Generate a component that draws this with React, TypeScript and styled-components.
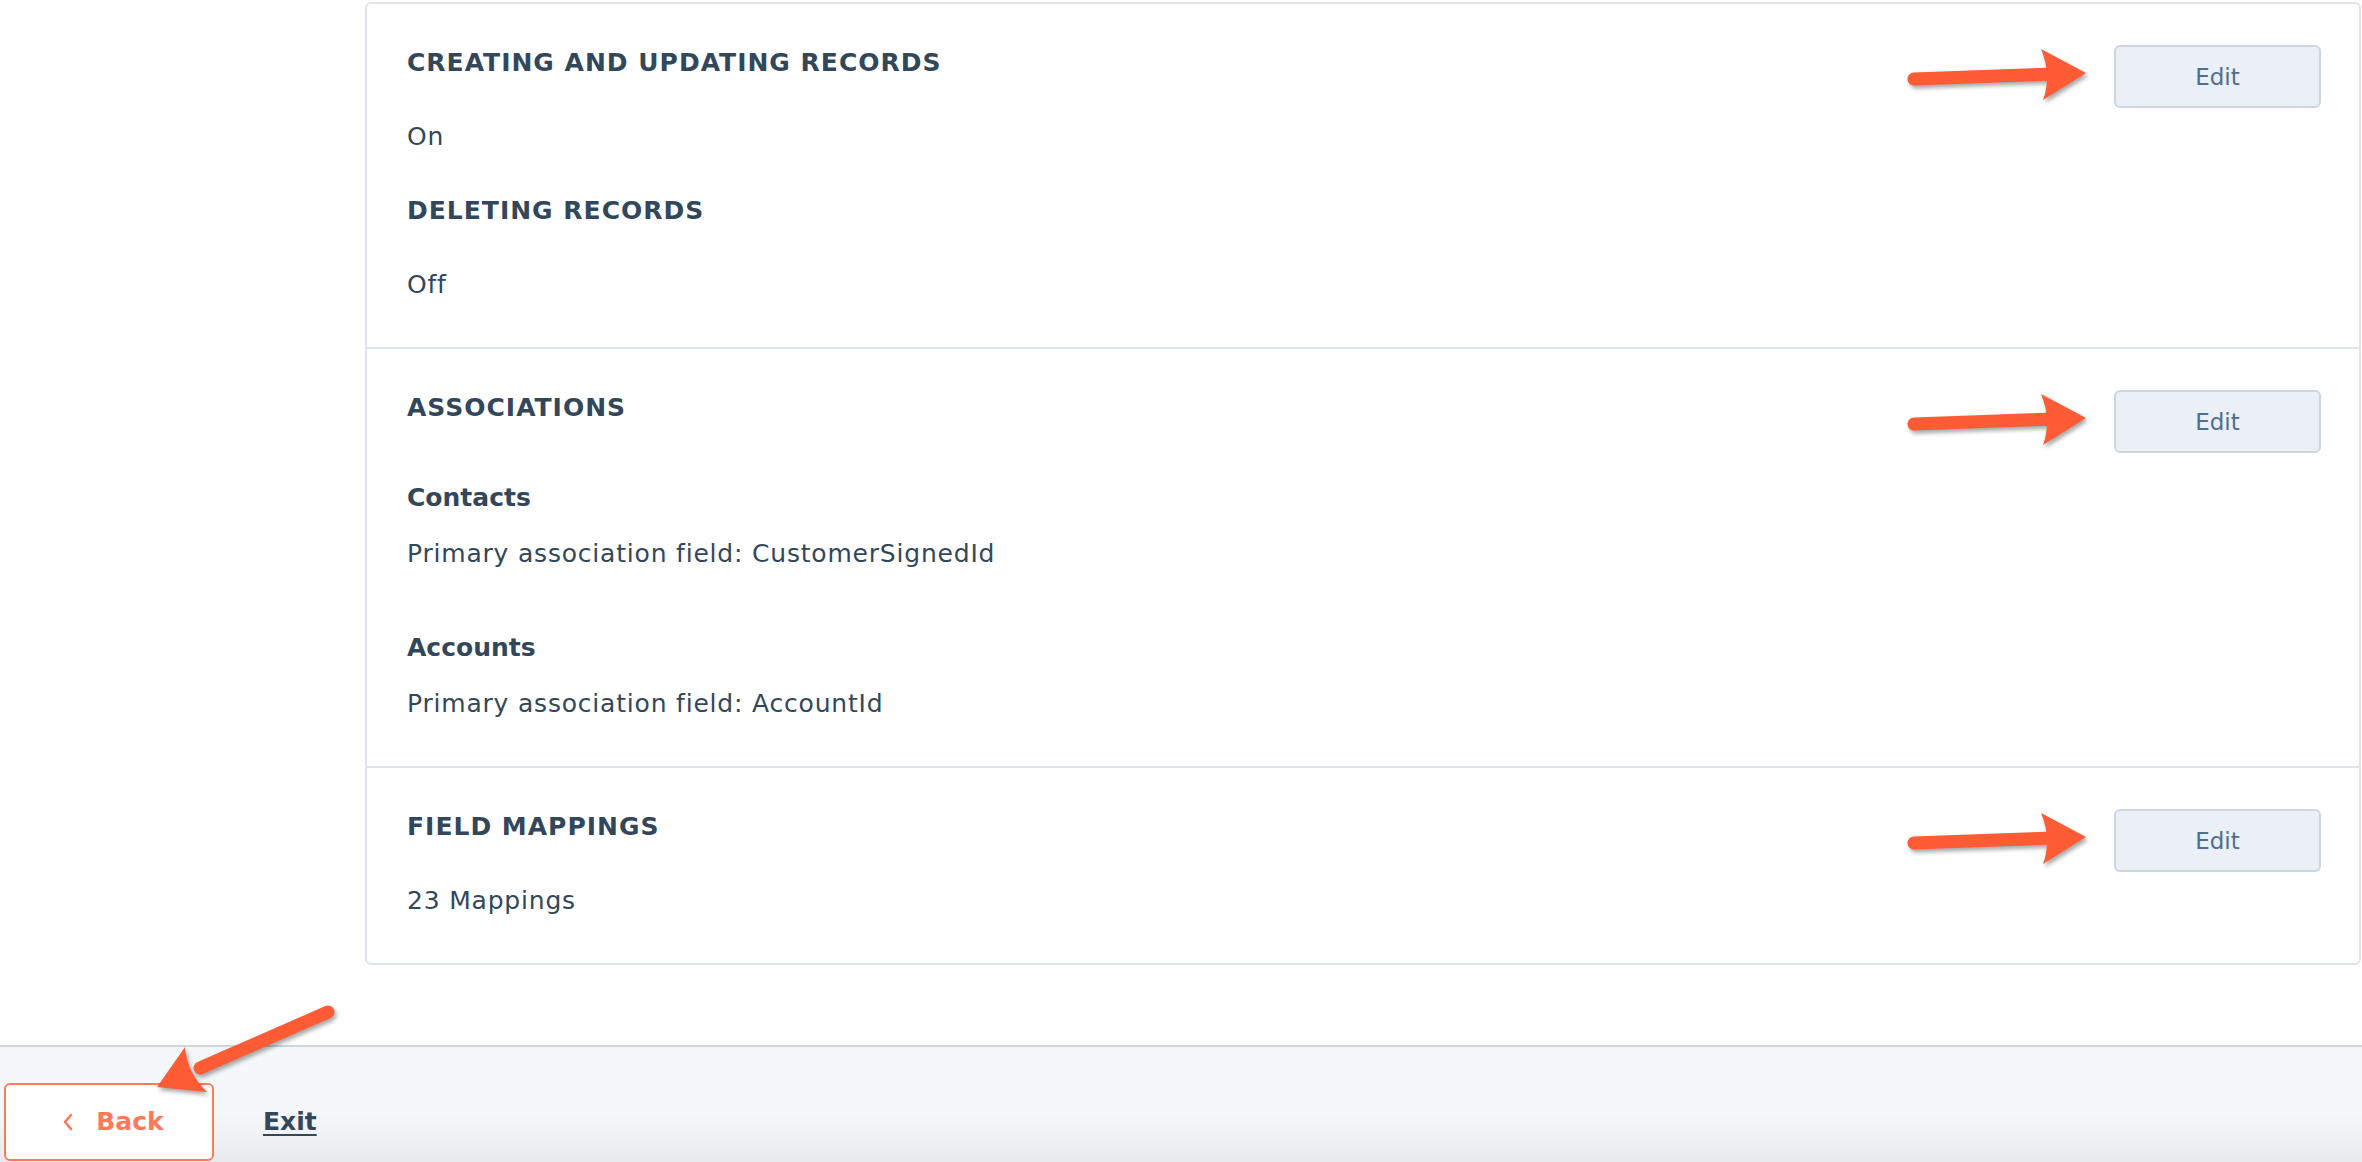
import styled, { createGlobalStyle } from "styled-components";

const FONT = `"DejaVu Sans", Verdana, sans-serif`;

const GlobalStyle = createGlobalStyle`
  html, body {
    margin: 0;
    padding: 0;
    background: #fff;
  }
  body {
    font-family: ${FONT};
    color: #33475b;
  }
  * {
    box-sizing: border-box;
  }
`;

type Assoc = { name: string; field: string };

const associations: Assoc[] = [
  { name: "Contacts", field: "CustomerSignedId" },
  { name: "Accounts", field: "AccountId" },
];

function PointerArrow() {
  // orange annotation arrow pointing right at the Edit button
  return (
    <ArrowSvg width="200" height="70" viewBox="0 0 200 70">
      <line
        x1="10"
        y1="38"
        x2="150"
        y2="33"
        stroke="#ff5b35"
        strokeWidth="13"
        strokeLinecap="round"
      />
      <path d="M137 8 L182 32 L139 59 Q148 34 137 8 Z" fill="#ff5b35" />
    </ArrowSvg>
  );
}

function BackArrow() {
  return (
    <BackArrowSvg width="210" height="120" viewBox="0 0 210 120">
      <line
        x1="188"
        y1="23"
        x2="60"
        y2="79"
        stroke="#ff5b35"
        strokeWidth="13"
        strokeLinecap="round"
      />
      <path d="M45 58 L17 98 L67 103 Q47 84 45 58 Z" fill="#ff5b35" />
    </BackArrowSvg>
  );
}

function EditButton() {
  return (
    <ButtonWrap>
      <PointerArrow />
      <Edit>Edit</Edit>
    </ButtonWrap>
  );
}

export default function App() {
  return (
    <>
      <GlobalStyle />
      <Page>
        <Main>
          <Card>
            <Section>
              <Details>
                <Title>Creating and updating records</Title>
                <Value>On</Value>
                <Title>Deleting records</Title>
                <Value>Off</Value>
              </Details>
              <EditButton />
            </Section>

            <Section>
              <div>
                <Title>Associations</Title>
                <AssocList>
                  {associations.map((a) => (
                    <AssocGroup key={a.name}>
                      <SubTitle>{a.name}</SubTitle>
                      <Value>Primary association field: {a.field}</Value>
                    </AssocGroup>
                  ))}
                </AssocList>
              </div>
              <EditButton />
            </Section>

            <Section>
              <Details>
                <Title>Field mappings</Title>
                <Value>23 Mappings</Value>
              </Details>
              <EditButton />
            </Section>
          </Card>
        </Main>

        <Footer>
          <BackArrow />
          <BackButton>
            <svg width="12" height="18" viewBox="0 0 12 18">
              <path
                d="M9 2 L3 9 L9 16"
                fill="none"
                stroke="#ff7a59"
                strokeWidth="2.6"
                strokeLinecap="round"
                strokeLinejoin="round"
              />
            </svg>
            Back
          </BackButton>
          <ExitLink href="#">Exit</ExitLink>
        </Footer>
      </Page>
    </>
  );
}

const Page = styled.div`
  height: 100vh;
  display: flex;
  flex-direction: column;
`;

const Main = styled.main`
  flex: 1;
  padding: 2px 1px 0 365px;
`;

const Card = styled.div`
  background: #fff;
  border: 2px solid #dfe3eb;
  border-radius: 6px;
`;

const Section = styled.section`
  display: flex;
  justify-content: space-between;
  align-items: flex-start;
  padding: 41px 38px 44px 40px;
  & + & {
    border-top: 2px solid #dfe3eb;
  }
`;

const Details = styled.div`
  display: flex;
  flex-direction: column;
  gap: 38px;
`;

const Title = styled.h2`
  margin: 0;
  font-size: 25px;
  line-height: 36px;
  font-weight: 700;
  letter-spacing: 1px;
  text-transform: uppercase;
  color: #33475b;
`;

const SubTitle = styled.h3`
  margin: 0;
  font-size: 25px;
  line-height: 36px;
  font-weight: 700;
  color: #33475b;
`;

const Value = styled.p`
  margin: 0;
  font-size: 25px;
  line-height: 36px;
  font-weight: 400;
  letter-spacing: 0.8px;
  color: #33475b;
`;

const AssocList = styled.div`
  margin-top: 54px;
  display: flex;
  flex-direction: column;
  gap: 58px;
`;

const AssocGroup = styled.div`
  display: flex;
  flex-direction: column;
  gap: 20px;
`;

const ButtonWrap = styled.div`
  position: relative;
  margin-top: 0;
`;

const ArrowSvg = styled.svg`
  position: absolute;
  left: -210px;
  top: -4px;
  overflow: visible;
  filter: drop-shadow(2px 3px 2px rgba(0, 0, 0, 0.35));
  pointer-events: none;
`;

const Edit = styled.button`
  width: 207px;
  height: 63px;
  border: 2px solid #cbd6e2;
  border-radius: 6px;
  background: #eaf0f6;
  color: #506e91;
  font-family: ${FONT};
  font-size: 23px;
  font-weight: 400;
  cursor: pointer;
`;

const Footer = styled.footer`
  position: relative;
  height: 117px;
  flex-shrink: 0;
  border-top: 2px solid #cbd6e2;
  background: linear-gradient(#f5f8fa 0%, #f5f8fa 55%, #e9eaec 100%);
  display: flex;
  align-items: center;
  gap: 49px;
  padding: 34px 0 0 4px;
`;

const BackArrowSvg = styled.svg`
  position: absolute;
  left: 140px;
  top: -58px;
  overflow: visible;
  z-index: 2;
  filter: drop-shadow(2px 3px 2px rgba(0, 0, 0, 0.35));
  pointer-events: none;
`;

const BackButton = styled.button`
  width: 210px;
  height: 78px;
  display: flex;
  align-items: center;
  justify-content: center;
  gap: 22px;
  border: 2px solid #ff7a59;
  border-radius: 6px;
  background: #fff;
  color: #ff7a59;
  font-family: ${FONT};
  font-size: 25px;
  font-weight: 700;
  padding: 0 0 0 8px;
  cursor: pointer;
`;

const ExitLink = styled.a`
  height: 78px;
  display: flex;
  align-items: center;
  color: #33475b;
  font-size: 25px;
  font-weight: 700;
  text-decoration: underline;
  text-decoration-thickness: 2px;
  text-underline-offset: 4px;
`;
